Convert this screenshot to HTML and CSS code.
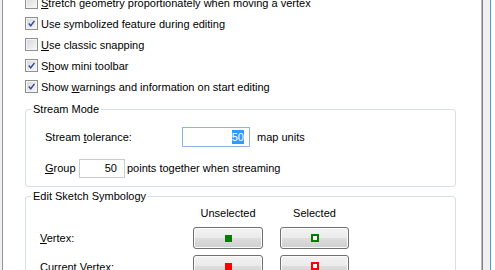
FILE: index.html
```html
<!DOCTYPE html>
<html lang="en">
<head>
  <meta charset="UTF-8">
  <title>Editing Options</title>
  <link rel="stylesheet" href="styles.css">
</head>
<body>
  <div class="page">
    <div class="panel">
      <div class="checks">
        <label class="check"><span class="box"></span><span><u>S</u>tretch geometry proportionately when moving a vertex</span></label>
        <label class="check"><span class="box checked"><svg viewBox="0 0 13 13"><path d="M3.2 6.6 L5.6 9.2 L10 3.4"/></svg></span><span>Use symbolized feature during editing</span></label>
        <label class="check"><span class="box"></span><span><u>U</u>se classic snapping</span></label>
        <label class="check"><span class="box checked"><svg viewBox="0 0 13 13"><path d="M3.2 6.6 L5.6 9.2 L10 3.4"/></svg></span><span>S<u>h</u>ow mini toolbar</span></label>
        <label class="check"><span class="box checked"><svg viewBox="0 0 13 13"><path d="M3.2 6.6 L5.6 9.2 L10 3.4"/></svg></span><span>Show <u>w</u>arnings and information on start editing</span></label>
      </div>

      <fieldset class="group stream">
        <legend>Stream Mode</legend>
        <div class="group-body">
          <div class="field-row">
            <span class="tol-label">Stream <u>t</u>olerance:</span>
            <div class="textbox focused"><span class="sel">50</span></div>
            <span class="after">map units</span>
          </div>
          <div class="field-row second">
            <span class="grp-label"><u>G</u>roup</span>
            <div class="textbox small">50</div>
            <span class="after near">points together when streaming</span>
          </div>
        </div>
      </fieldset>

      <fieldset class="group sketch">
        <legend>Edit Sketch Symbology</legend>
        <div class="sym-grid">
          <span></span>
          <span class="head">Unselected</span>
          <span class="head">Selected</span>

          <span class="sym-label"><u>V</u>ertex:</span>
          <button class="sym-btn"><span class="dot green"></span></button>
          <button class="sym-btn"><span class="ring green"></span></button>

          <span class="sym-label">Current Vertex:</span>
          <button class="sym-btn"><span class="dot red"></span></button>
          <button class="sym-btn"><span class="ring red"></span></button>
        </div>
      </fieldset>
    </div>
    <div class="edge"></div>
  </div>
</body>
</html>
```

FILE: styles.css
```css
html, body {
  margin: 0;
  padding: 0;
}
body {
  font-family: "Liberation Sans", Arial, sans-serif;
  font-size: 11px;
  color: #000;
  background: #f0f0f0;
}
.page {
  display: flex;
  height: 270px;
  overflow: hidden;
}
.panel {
  width: 479px;
  margin-left: 2px;
  background: #fff;
  border-left: 1px solid #8e9199;
  border-right: 1px solid #7f838b;
  box-shadow: inset -1px 0 0 #b4b6ba;
  overflow: hidden;
}
.edge {
  flex: 1;
  margin-left: 7px;
  background: #fff;
  border-left: 1px solid #3aa6e8;
}

/* checkbox list */
.checks {
  margin-top: -8px;
  padding-left: 22px;
}
.check {
  display: flex;
  align-items: center;
  height: 21px;
  gap: 3px;
}
.box {
  width: 13px;
  height: 13px;
  box-sizing: border-box;
  border: 1px solid #8e8f8f;
  box-shadow: inset 0 0 0 1px #f4f4f4;
  background: linear-gradient(135deg, #d6d7d9, #f8f8f8);
  flex: none;
}
.box svg {
  display: block;
  width: 11px;
  height: 11px;
}
.box path {
  fill: none;
  stroke: #34489e;
  stroke-width: 1.7;
}

/* group boxes */
.group {
  width: 431px;
  box-sizing: border-box;
  margin: 0 0 0 22px;
  padding: 0;
  border: 1px solid #d5dfe5;
  border-radius: 3px;
  min-width: 0;
}
.group legend {
  margin-left: 5px;
  padding: 0 2px;
  line-height: 14px;
}
.stream {
  margin-top: 5px;
}
.group-body {
  padding: 9px 0 6px 19px;
}
.field-row {
  display: flex;
  align-items: center;
  height: 24px;
}
.field-row.second {
  margin-top: 7px;
}
.tol-label {
  width: 137px;
}
.grp-label {
  width: 34px;
}
.textbox {
  box-sizing: border-box;
  height: 20px;
  width: 68px;
  border: 1px solid #dbdfe6;
  border-top-color: #abadb3;
  text-align: right;
  padding-right: 6px;
  line-height: 18px;
}
.textbox.focused {
  border-color: #8fb4dd;
  padding-right: 5px;
}
.textbox.small {
  width: 46px;
  height: 19px;
  line-height: 17px;
  padding-right: 7px;
  border-color: #c9cdd3;
}
.sel {
  background: #3399ff;
  color: #fff;
  padding: 1px 0;
}
.after {
  margin-left: 7px;
}
.after.near {
  margin-left: 2px;
}

.sketch {
  margin-top: 2px;
}
.sym-grid {
  padding: 2px 0 0 14px;
  display: grid;
  grid-template-columns: 136px 70px 69px;
  column-gap: 17px;
  grid-template-rows: 16px 22px 22px;
  row-gap: 6px;
  align-items: center;
}
.sym-grid .sym-label:last-of-type {
  margin-top: 2px;
}
.head {
  text-align: center;
}
.sym-btn {
  height: 22px;
  padding: 0;
  border: 1px solid #707070;
  border-radius: 3px;
  box-shadow: inset 0 0 0 1px #fbfbfb;
  background: linear-gradient(#f2f2f2 0%, #ebebeb 48%, #dddddd 52%, #cfcfcf 100%);
  display: flex;
  align-items: center;
  justify-content: center;
}
.dot {
  width: 7px;
  height: 7px;
}
.ring {
  width: 8px;
  height: 8px;
  box-sizing: border-box;
  border: 2px solid;
  background: #fff;
}
.dot.green { background: #008000; }
.dot.red { background: #ff0000; }
.ring.green { border-color: #008000; }
.ring.red { border-color: #ff0000; }
```
